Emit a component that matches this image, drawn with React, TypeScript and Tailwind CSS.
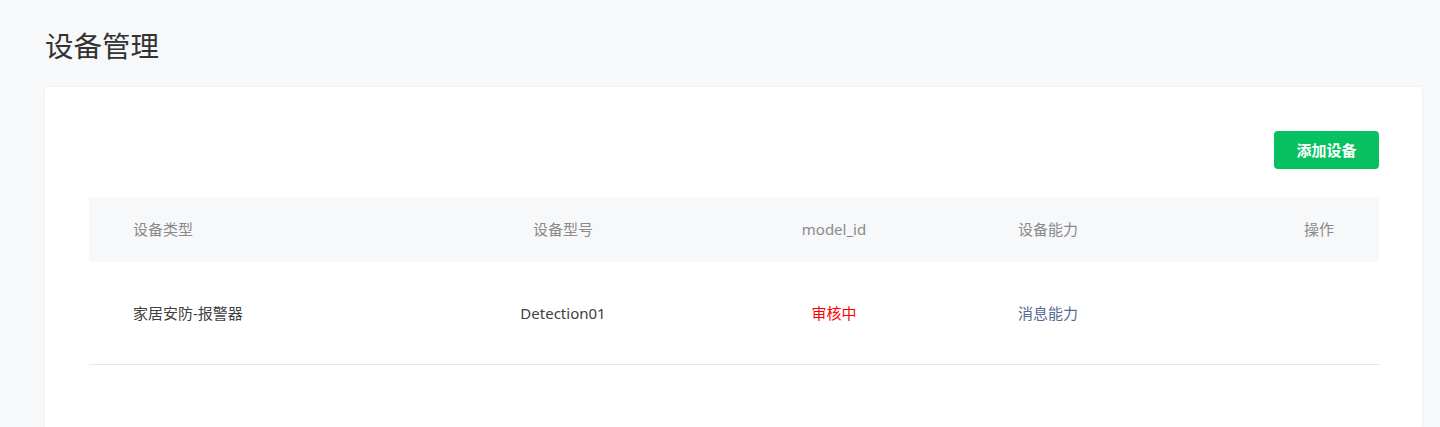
const FONT = '"Noto Sans", "Noto Sans CJK SC", sans-serif'

interface Device {
  type: string
  model: string
  status: string
  ability: string
}

const devices: Device[] = [
  { type: '家居安防-报警器', model: 'Detection01', status: '审核中', ability: '消息能力' },
]

const cols = 'grid grid-cols-[348px_252px_290px_280px_120px]'

export default function App() {
  return (
    <div className="h-[427px] overflow-hidden bg-[#f7f8fa] pl-[45px] pr-[18px] pt-[26px]" style={{ fontFamily: FONT }}>
      <h1 className="text-[28.5px] leading-[40px] text-[#333]">设备管理</h1>
      <div className="mt-[21px] h-[340px] rounded-t-[2px] bg-white pl-[44px] pr-[43px] pt-[44px] shadow-[0_0_3px_rgba(0,0,0,0.06)]">
        <div className="flex justify-end">
          <button className="h-[38px] w-[105px] rounded-[4px] bg-[#07c160] text-[15px] font-bold text-white">
            添加设备
          </button>
        </div>
        <div className="mt-[28px]">
          <div className={`${cols} h-[65px] items-center bg-[#f7f8fa] text-[15px] text-[#8a8a8a]`}>
            <div className="pl-[44px]">设备类型</div>
            <div className="text-center">设备型号</div>
            <div className="text-center">model_id</div>
            <div className="pl-[39px]">设备能力</div>
            <div className="text-center">操作</div>
          </div>
          {devices.map((d) => (
            <div
              key={d.model}
              className={`${cols} h-[103px] items-center border-b border-[#e6e6e6] text-[15px] text-[#404040]`}
            >
              <div className="pl-[44px]">{d.type}</div>
              <div className="text-center">{d.model}</div>
              <div className="text-center text-[#f00]">{d.status}</div>
              <div className="pl-[39px] text-[#576b95]">{d.ability}</div>
              <div />
            </div>
          ))}
        </div>
      </div>
    </div>
  )
}
